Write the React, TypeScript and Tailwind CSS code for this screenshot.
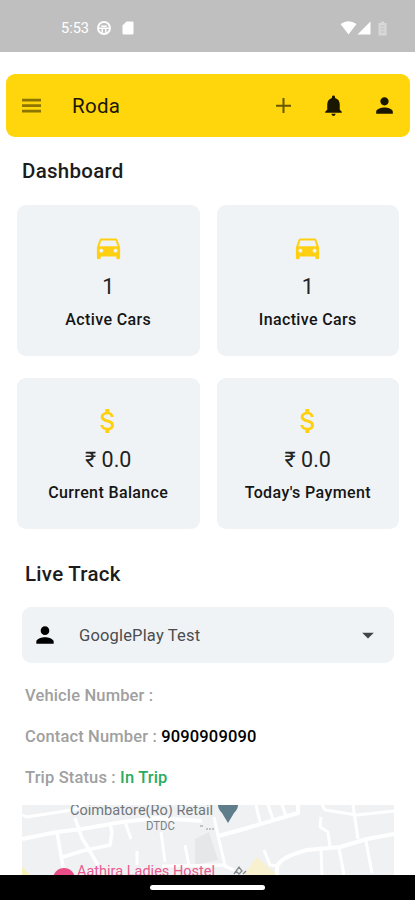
import type { ReactNode } from "react";
import {
  MdArrowDropDown,
  MdAttachMoney,
  MdDirectionsCar,
  MdNotifications,
  MdPerson,
} from "react-icons/md";

const stats = [
  { label: "Active Cars", value: "1", kind: "car" },
  { label: "Inactive Cars", value: "1", kind: "car" },
  { label: "Current Balance", value: "₹ 0.0", kind: "money" },
  { label: "Today's Payment", value: "₹ 0.0", kind: "money" },
];

function StatusBar() {
  return (
    <div className="flex h-[52px] shrink-0 items-center bg-[#bfbfbf] pt-1 pl-[61px] pr-[28px] text-white">
      <span className="w-[29px] pt-[2px] text-[14.5px] leading-none">5:53</span>
      <svg className="ml-[7px] size-[14px]" viewBox="0 0 14 14" fill="none" stroke="currentColor">
        <circle cx="7" cy="7" r="6" strokeWidth="1.9" />
        <path d="M1 7.2h12M4.2 5.2h5.6M5.3 7.5v5M8.7 7.5v5" strokeWidth="1.5" />
      </svg>
      <svg className="ml-[11px] h-[14px] w-3" viewBox="0 0 12 14" fill="currentColor">
        <path d="M4.5 0.5H10.5Q11.5 0.5 11.5 1.5V12.5Q11.5 13.5 10.5 13.5H1.5Q0.5 13.5 0.5 12.5V4.5Z" />
      </svg>
      <svg className="ml-auto h-[14px] w-[17px]" viewBox="0 0 17 14" fill="currentColor">
        <path d="M8.5 13.5L0.5 3Q8.5 -2.4 16.5 3Z" />
      </svg>
      <svg className="h-[14px] w-[14px]" viewBox="0 0 14 14" fill="currentColor">
        <path d="M0.5 13.5L13.5 0.5V13.5Z" />
      </svg>
      <svg className="ml-[7px] h-[15px] w-[9px] opacity-40" viewBox="0 0 9 15" fill="currentColor">
        <path d="M3 0.5h3v1.5h2.5v12.5h-8V2H3z" />
        <path d="M2.5 5h4M2.5 8h4M2.5 11h4" stroke="#bfbfbf" strokeWidth="1" />
      </svg>
    </div>
  );
}

function AppBar() {
  return (
    <header className="mt-[22px] mr-[5px] ml-[6px] flex h-[63px] shrink-0 items-center rounded-[9px] bg-[#ffd60c] pr-[13px] pl-4 text-[#1a1700]">
      <svg className="h-[15px] w-[19px]" viewBox="0 0 19 15" stroke="#8c7500" strokeWidth="2.7">
        <path d="M0 2.2h19M0 7.7h19M0 13.2h19" />
      </svg>
      <h1 className="ml-[31px] pt-[2px] text-[20.5px] leading-none tracking-[0.3px]">Roda</h1>
      <svg className="ml-auto size-[15px]" viewBox="0 0 15 15" stroke="#665700" strokeWidth="2">
        <path d="M7.5 0v15M0 7.7h15" />
      </svg>
      <MdNotifications className="ml-[30px] size-[25px]" />
      <MdPerson className="ml-[26px] size-[25px]" />
    </header>
  );
}

function StatCard({ label, value, kind }: { label: string; value: string; kind: string }) {
  return (
    <div className="flex h-[151px] flex-col items-center rounded-[9px] bg-[#eff3f6] pt-[26px]">
      <div className="flex h-8 items-center">
        {kind === "car" ? (
          <MdDirectionsCar className="size-[31px] text-[#ffd012]" />
        ) : (
          <MdAttachMoney className="mt-[2px] size-[32px] text-[#ffd012]" />
        )}
      </div>
      <div className="mt-[10px] h-7 text-[21.5px] leading-7 text-[#222]">{value}</div>
      <div className="mt-[9px] text-[16px] leading-5 font-medium tracking-[0.37px] text-[#151515]">
        {label}
      </div>
    </div>
  );
}

function InfoRow({ label, children }: { label: string; children?: ReactNode }) {
  return (
    <div className="h-[41px] text-[16.5px] leading-[41px] font-medium tracking-[0.15px] text-[#a0a0a0]">
      {label} : {children}
    </div>
  );
}

function MapPreview() {
  return (
    <svg
      className="ml-[22px] h-[70px] w-[372px] shrink-0 bg-[#f0f1f2]"
      viewBox="0 0 372 70"
      fontFamily="Roboto, sans-serif"
    >
      <path d="M173 34L187 27L196 55L173 60Z" fill="#e6e7e9" />
      <path d="M223 68L235 52L255 70H223Z" fill="#f8f1cf" />
      <path d="M0 62L8 70H0Z" fill="#f8f1b5" />
      <g fill="none" stroke="#fff" strokeWidth="3" strokeLinejoin="round">
        <path d="M0 10L5 12L50 5L62 0" />
        <path d="M0 34L35 27L60 24L100 17L135 13L180 16M196 31L222 24L276 8V0" strokeWidth="4" />
        <path d="M35 27L41 62V70M41 52L60 46L88 40L90 27L88 19M53 13L60 33L76 60" strokeWidth="3.5" />
        <path d="M103 17L109 34M115 46V60M139 27L143 57M163 40L167 61M140 61L200 60L212 65" />
        <path d="M192 12L196 31L203 60M234 0L238 17M246 0L251 14M260 0L264 11" />
        <path d="M242 45L248 60L256 61" />
        <path d="M255 70V62Q258 52 285 45L318 42L345 34L372 29" strokeWidth="4" />
        <path d="M299 12L298 22L306 27L308 42M331 0L336 34M299 45L300 70M317 43L322 70M344 36L350 68M300 0L303 5L335 10L372 6" />
      </g>
      <text x="48" y="10" fontSize="14" fill="#70777c" textLength="143" lengthAdjust="spacingAndGlyphs">
        Coimbatore(Ro) Retail
      </text>
      <text x="124" y="25" fontSize="12" fill="#7b8287" textLength="29" lengthAdjust="spacingAndGlyphs">
        DTDC
      </text>
      <path d="M178 21h3M184 24h2M187 24h2M190 24h2" stroke="#91979b" strokeWidth="1.2" />
      <path d="M196 0H216Q216 4 212 8L206 18L200 8Q196 4 196 0Z" fill="#607d8b" />
      <circle cx="42" cy="74" r="11" fill="#e94e87" />
      <text x="55" y="71" fontSize="14" fill="#e85a91" textLength="138" lengthAdjust="spacingAndGlyphs">
        Aathira Ladies Hostel
      </text>
      <path
        d="M212 69L217 62L220 66L217 69L214 66M221 69L224 66"
        fill="none"
        stroke="#84898c"
        strokeWidth="1.3"
      />
    </svg>
  );
}

export default function App() {
  return (
    <div className="flex h-[900px] w-[415px] flex-col overflow-hidden bg-white font-['Roboto',sans-serif]">
      <StatusBar />
      <AppBar />

      <h2 className="mt-5 ml-[22px] h-7 shrink-0 text-[20.5px] leading-7 font-medium tracking-[0.27px] text-[#1c1c1c]">
        Dashboard
      </h2>
      <div className="mt-5 mr-4 ml-[17px] grid shrink-0 grid-cols-2 gap-x-[17px] gap-y-[22px]">
        {stats.map((s) => (
          <StatCard key={s.label} {...s} />
        ))}
      </div>

      <h2 className="mt-[31px] ml-[25px] h-7 shrink-0 text-[20.5px] leading-7 font-medium tracking-[0.27px] text-[#1c1c1c]">
        Live Track
      </h2>
      <button className="mt-[19px] mr-[21px] ml-[22px] flex h-[56px] shrink-0 items-center rounded-[9px] bg-[#eff3f6] pr-[12px] pl-[10px]">
        <MdPerson className="size-[26px] text-black" />
        <span className="ml-[21px] pt-[2px] text-[16.5px] tracking-[0.17px] text-[#4a4c4e]">
          GooglePlay Test
        </span>
        <MdArrowDropDown className="ml-auto size-[28px] text-[#444]" />
      </button>

      <div className="mt-[12px] ml-[25px] h-[130px] shrink-0">
        <InfoRow label="Vehicle Number" />
        <InfoRow label="Contact Number">
          <span className="text-black">9090909090</span>
        </InfoRow>
        <InfoRow label="Trip Status">
          <span className="text-[#2bab60]">In Trip</span>
        </InfoRow>
      </div>
      <MapPreview />

      <div className="flex h-[25px] shrink-0 justify-center bg-black pt-[10px]">
        <div className="h-[5px] w-[115px] rounded-full bg-white" />
      </div>
    </div>
  );
}
